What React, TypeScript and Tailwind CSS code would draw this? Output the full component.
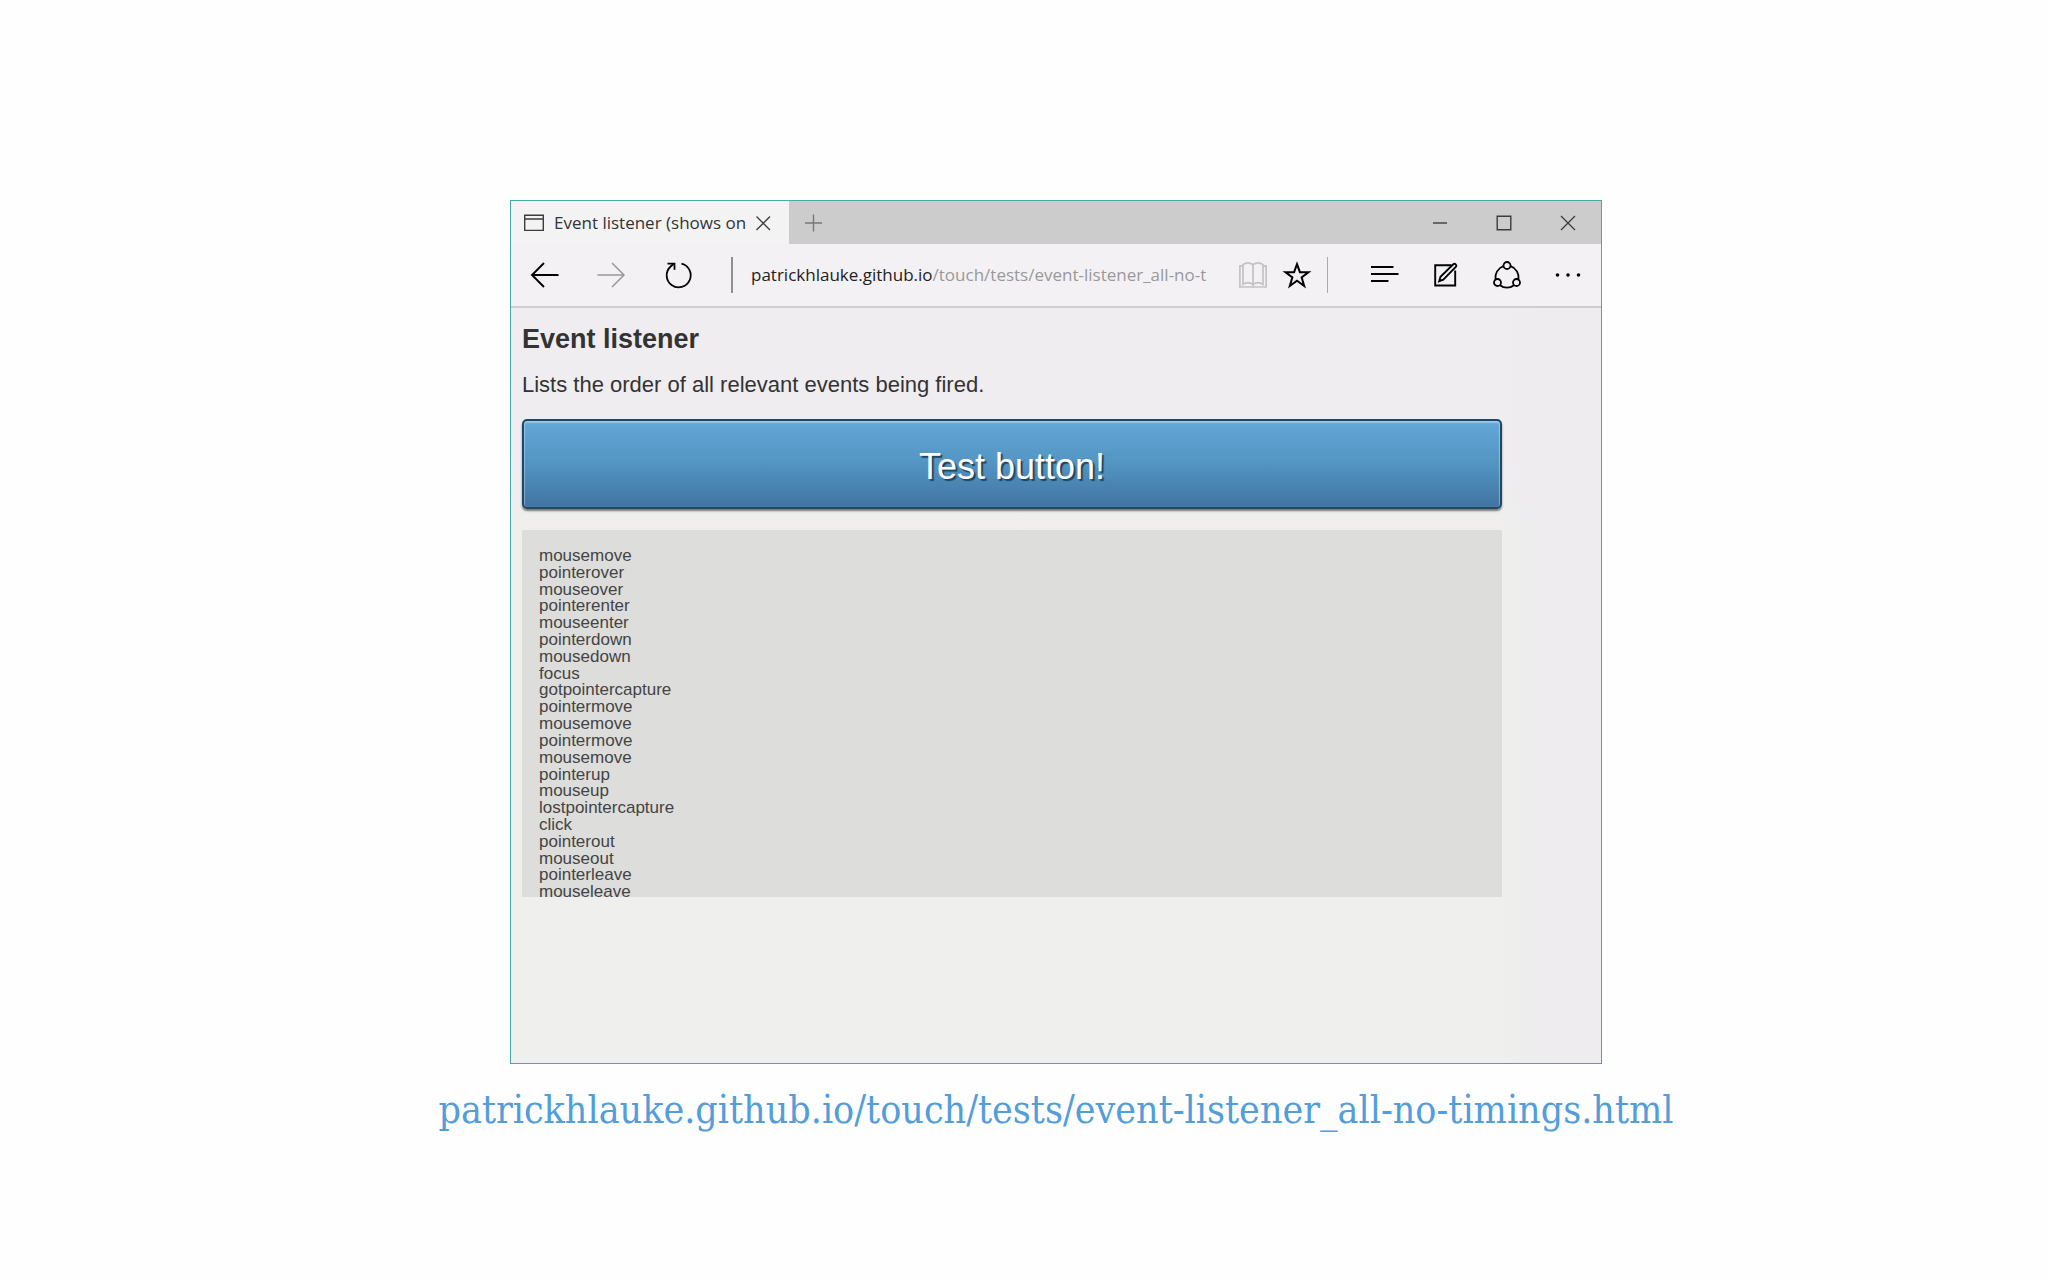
import type { ReactNode } from "react";

const events = [
  "mousemove",
  "pointerover",
  "mouseover",
  "pointerenter",
  "mouseenter",
  "pointerdown",
  "mousedown",
  "focus",
  "gotpointercapture",
  "pointermove",
  "mousemove",
  "pointermove",
  "mousemove",
  "pointerup",
  "mouseup",
  "lostpointercapture",
  "click",
  "pointerout",
  "mouseout",
  "pointerleave",
  "mouseleave",
];

function Icon({
  width = 1.6,
  children,
}: {
  width?: number;
  children: ReactNode;
}) {
  return (
    <svg
      viewBox="0 0 32 32"
      fill="none"
      stroke="currentColor"
      strokeWidth={width}
      className="size-8 shrink-0"
      aria-hidden="true"
    >
      {children}
    </svg>
  );
}

function BarButton({
  label,
  className,
  children,
}: {
  label: string;
  className: string;
  children: ReactNode;
}) {
  return (
    <button
      type="button"
      aria-label={label}
      className={`${className} h-full flex shrink-0 items-center justify-center`}
    >
      {children}
    </button>
  );
}

function TabStrip() {
  return (
    <div className="flex h-[43px] bg-[#cdcccd] text-[#3c3c3c]">
      <div className="flex w-[278px] items-center bg-[#f3f3f4] pr-2.5 pl-[7px]">
        <Icon width={1.4}>
          <path d="M6.7 8.2h18.6v15.2H6.7zM6.7 12h18.6" />
        </Icon>
        <span className="flex-1 whitespace-nowrap pl-1 text-[17px] text-[#333]">
          Event listener (shows on
        </span>
        <BarButton label="Close tab" className="w-8">
          <Icon width={1.3}>
            <path d="M9.5 9.5l13.5 13.5M23 9.5L9.5 23" />
          </Icon>
        </BarButton>
      </div>
      <BarButton label="New tab" className="w-12 text-[#777]">
        <Icon width={1.4}>
          <path d="M16.5 7.500v17M8 16h17" />
        </Icon>
      </BarButton>
      <div className="ml-auto flex pr-px">
        <BarButton label="Minimize" className="w-16">
          <Icon width={1.4}>
            <path d="M9 16h14" />
          </Icon>
        </BarButton>
        <BarButton label="Maximize" className="w-16">
          <Icon width={1.4}>
            <path d="M9.2 9.2h13.6v13.6H9.2z" />
          </Icon>
        </BarButton>
        <BarButton label="Close window" className="w-16">
          <Icon width={1.3}>
            <path d="M9 9l14 14M23 9L9 23" />
          </Icon>
        </BarButton>
      </div>
    </div>
  );
}

function Toolbar() {
  return (
    <div className="flex h-16 items-center border-b-2 border-[#cfcdcf] bg-[#f3f1f4] text-black">
      <BarButton label="Back" className="w-[67px]">
        <Icon width={1.9}>
          <path d="M29.500 16H3M15 4L3 16l12 12" />
        </Icon>
      </BarButton>
      <BarButton label="Forward" className="w-[67px] text-[#999]">
        <Icon width={1.5}>
          <path d="M1.500 16h26.500M16 4l12 12-12 12" />
        </Icon>
      </BarButton>
      <BarButton label="Refresh" className="w-[67px]">
        <Icon width={1.8}>
          <path d="M18.500 4.700A12 12 0 1 1 7.600 7.500L10.500 5" />
          <path d="M4.500 4.600h7v6.200" />
        </Icon>
      </BarButton>
      <span className="ml-[19px] h-9 w-0.5 bg-[#909090]" />

      {/* Address */}
      <div className="ml-[18px] flex flex-1 items-center text-[17px]">
        <label htmlFor="address" className="text-[#222]">
          patrickhlauke.github.io
        </label>
        <input
          id="address"
          type="text"
          defaultValue="/touch/tests/event-listener_all-no-t"
          className="min-w-0 flex-1 bg-transparent text-[#999] outline-none"
        />
      </div>

      <BarButton label="Reading view" className="w-11 text-[#c4c2c4]">
        <Icon width={1.7}>
          <path d="M16 5.600c-3-2.200-7-2.200-10 0v19.800c3-2 7-2 10 0 3-2 7-2 10 0V5.600c-3-2.200-7-2.200-10 0zM16 5.600V28" />
          <path d="M6 6.800H2.900V28h26.200V6.800H26" />
        </Icon>
      </BarButton>
      <BarButton label="Add to favorites" className="w-11">
        <Icon width={2}>
          <path d="M16 5.200l2.900 8h8.600l-6.900 5.200 2.600 8.600-7.200-5.200-7.200 5.200 2.600-8.600-6.900-5.200h8.600z" />
        </Icon>
      </BarButton>
      <span className="ml-2 h-9 w-px bg-[#aaa]" />
      <div className="ml-[26px] flex h-full pr-[3px]">
        <BarButton label="Hub" className="w-[61px]">
          <Icon width={1.9}>
            <path d="M2 8h22.500M2 15h27.500M2 22h17.500" />
          </Icon>
        </BarButton>
        <BarButton label="Make a web note" className="w-[61px]">
          <Icon width={1.9}>
            <path d="M21.500 6.200H5.200v20.300h20V11.500" />
            <path d="M9.200 22.200l1.300-4.400L23.300 5.200c1.600-1.300 3.900.8 2.700 2.500L13.300 20.600z" />
          </Icon>
        </BarButton>
        <BarButton label="Share" className="w-[61px]">
          <Icon width={1.8}>
            <circle cx="16" cy="6.500" r="3.500" />
            <circle cx="6.500" cy="23.500" r="3.500" />
            <circle cx="25.500" cy="23.500" r="3.500" />
            <path d="M12.500 7.200A12 12 0 0 0 4.500 20.500M19.500 7.200a12 12 0 0 1 8 13.300M9 26.200a11.500 11.500 0 0 0 14 0" />
          </Icon>
        </BarButton>
        <BarButton label="More" className="w-[61px]">
          <Icon width={0}>
            <g fill="currentColor">
              <circle cx="5.500" cy="16" r="1.800" />
              <circle cx="16" cy="16" r="1.800" />
              <circle cx="26.500" cy="16" r="1.800" />
            </g>
          </Icon>
        </BarButton>
      </div>
    </div>
  );
}

function TestPage() {
  return (
    <main className="bg-[linear-gradient(to_right,transparent_91%,#eeecef_95%),linear-gradient(to_bottom,#efedf0_20%,#efefed_30%)] pt-[15px] pr-[99px] pb-[166px] pl-[11px] font-['Liberation_Sans',Arial,sans-serif] text-[#333]">
      <h1 className="text-[27px] leading-8 font-bold">Event listener</h1>
      <p className="mt-4 text-[22px] leading-7">
        Lists the order of all relevant events being fired.
      </p>
      <button
        type="button"
        className="mt-5 block h-[90px] w-full rounded-[5px] border-2 border-[#1d4866] bg-linear-to-b from-[#64a8d8] via-[#5294c2] to-[#4174a3] pt-1.5 text-[36px] text-white shadow-[0_2px_2px_rgba(0,0,0,0.5),inset_0_1px_1px_1px_rgba(255,255,255,0.35)] text-shadow-[2px_2px_1px_#1c4560]"
      >
        Test button!
      </button>

      {/* Event log */}
      <div className="mt-[21px] h-[367px] bg-[#dddddb] px-[17px] pt-5">
        <ol className="grid h-[353px] auto-rows-fr text-[17px] leading-3 text-[#444]">
          {events.map((name, i) => (
            <li key={i}>{name}</li>
          ))}
        </ol>
      </div>
    </main>
  );
}

export default function App() {
  return (
    <div className="flex min-h-screen flex-col items-center bg-[#fefefe] pt-[200px] pl-16 font-['Open_Sans','Noto_Sans',sans-serif]">
      <div className="w-full max-w-[1092px] border border-[#45a9ae]">
        <TabStrip />
        <Toolbar />
        <TestPage />
      </div>
      <a
        href="https://patrickhlauke.github.io/touch/tests/event-listener_all-no-timings.html"
        className="mt-[22px] font-['DejaVu_Serif_Condensed','DejaVu_Serif',serif] text-[39px] leading-12 text-[#529dda]"
      >
        patrickhlauke.github.io/touch/tests/event-listener_all-no-timings.html
      </a>
    </div>
  );
}
